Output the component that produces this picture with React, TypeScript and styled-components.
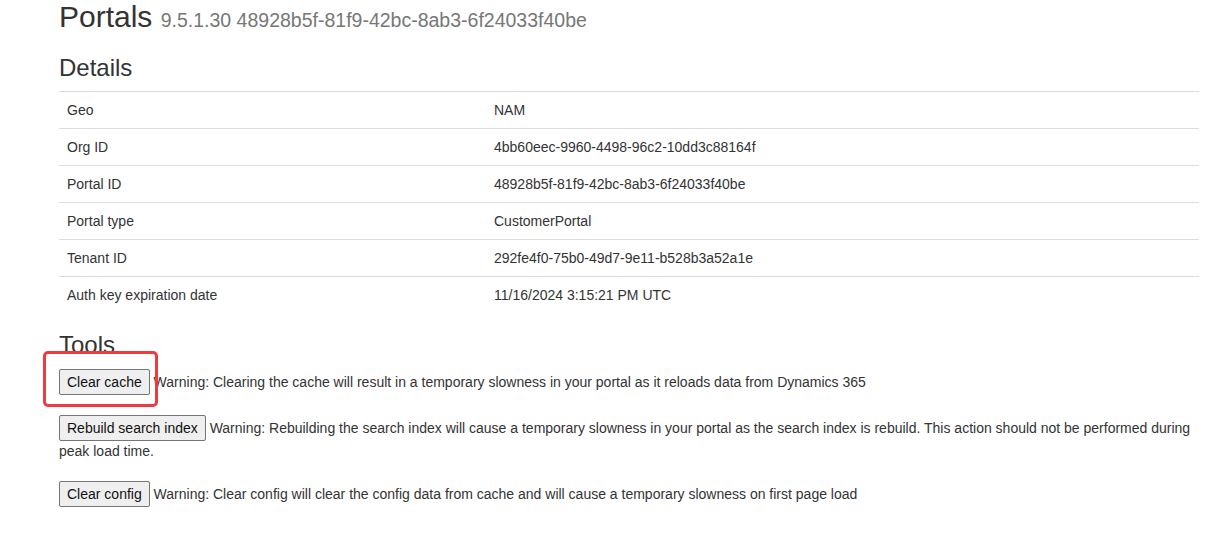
import React from "react";
import styled, { createGlobalStyle } from "styled-components";

const GlobalStyle = createGlobalStyle`
  html, body {
    margin: 0;
    padding: 0;
    background: #fff;
  }
  body {
    font-family: "Liberation Sans", Arial, Helvetica, sans-serif;
    font-size: 14px;
    line-height: 20px;
    color: #333;
  }
`;

const Page = styled.div`
  width: 1140px;
  padding: 0 0 40px 59px;
`;

const Title = styled.h1`
  margin: 0;
  font-size: 30px;
  font-weight: 500;
  line-height: 33px;
  color: #333;
`;

const Sub = styled.small`
  font-size: 65%;
  font-weight: 400;
  color: #777;
`;

const SectionTitle = styled.h2<{ $top: number; $bottom: number }>`
  margin: ${(p) => p.$top}px 0 ${(p) => p.$bottom}px;
  font-size: 24px;
  font-weight: 500;
  line-height: 26px;
  color: #333;
`;

const Table = styled.table`
  width: 100%;
  border-collapse: collapse;
  border-spacing: 0;
  table-layout: fixed;
`;

const Cell = styled.td`
  padding: 8px;
  line-height: 20px;
  border-top: 1px solid #ddd;
  vertical-align: top;
`;

const ToolRow = styled.div`
  position: relative;
  line-height: 20px;
  margin-bottom: 20px;
`;

const Button = styled.button`
  display: inline-block;
  box-sizing: border-box;
  height: 26px;
  padding: 0 7px;
  margin: 0;
  font-family: "Liberation Sans", Arial, Helvetica, sans-serif;
  font-size: 14px;
  line-height: 24px;
  color: #111;
  background: #efefef;
  border: 1px solid #767676;
  border-radius: 2px;
  vertical-align: baseline;
  cursor: pointer;
`;

const Highlight = styled.div`
  position: absolute;
  left: -16px;
  top: -18px;
  width: 115px;
  height: 56px;
  box-sizing: border-box;
  border: 3px solid #ee3b40;
  border-radius: 5px;
  pointer-events: none;
`;

const details: [string, string][] = [
  ["Geo", "NAM"],
  ["Org ID", "4bb60eec-9960-4498-96c2-10dd3c88164f"],
  ["Portal ID", "48928b5f-81f9-42bc-8ab3-6f24033f40be"],
  ["Portal type", "CustomerPortal"],
  ["Tenant ID", "292fe4f0-75b0-49d7-9e11-b528b3a52a1e"],
  ["Auth key expiration date", "11/16/2024 3:15:21 PM UTC"],
];

const tools: { label: string; warning: string; highlight?: boolean }[] = [
  {
    label: "Clear cache",
    warning:
      "Warning: Clearing the cache will result in a temporary slowness in your portal as it reloads data from Dynamics 365",
    highlight: true,
  },
  {
    label: "Rebuild search index",
    warning:
      "Warning: Rebuilding the search index will cause a temporary slowness in your portal as the search index is rebuild. This action should not be performed during peak load time.",
  },
  {
    label: "Clear config",
    warning:
      "Warning: Clear config will clear the config data from cache and will cause a temporary slowness on first page load",
  },
];

export default function App() {
  return (
    <>
      <GlobalStyle />
      <Page>
        <Title>
          Portals <Sub>9.5.1.30 48928b5f-81f9-42bc-8ab3-6f24033f40be</Sub>
        </Title>
        <SectionTitle $top={18} $bottom={10}>Details</SectionTitle>
        <Table>
          <colgroup>
            <col style={{ width: 427 }} />
            <col />
          </colgroup>
          <tbody>
            {details.map(([k, v]) => (
              <tr key={k}>
                <Cell>{k}</Cell>
                <Cell>{v}</Cell>
              </tr>
            ))}
          </tbody>
        </Table>
        <SectionTitle $top={19} $bottom={11}>Tools</SectionTitle>
        {tools.map((t) => (
          <ToolRow key={t.label}>
            {t.highlight && <Highlight />}
            <Button>{t.label}</Button> {t.warning}
          </ToolRow>
        ))}
      </Page>
    </>
  );
}
